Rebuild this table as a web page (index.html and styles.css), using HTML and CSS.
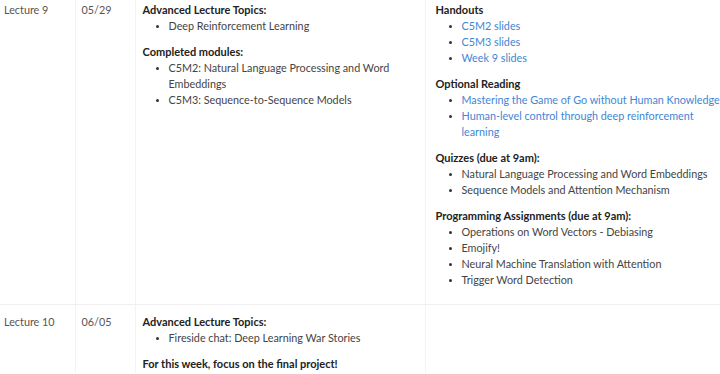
FILE: index.html
```html
<!DOCTYPE html>
<html>
<head>
<meta charset="utf-8">
<link rel="stylesheet" href="styles.css">
</head>
<body>
<table class="schedule">
  <tr class="row first">
    <td class="c-lec">Lecture 9</td>
    <td class="c-date">05/29</td>
    <td class="c-topic">
      <div class="sec">
        <div class="h">Advanced Lecture Topics:</div>
        <ul><li>Deep Reinforcement Learning</li></ul>
      </div>
      <div class="sec">
        <div class="h">Completed modules:</div>
        <ul>
          <li>C5M2: Natural Language Processing and Word Embeddings</li>
          <li>C5M3: Sequence-to-Sequence Models</li>
        </ul>
      </div>
    </td>
    <td class="c-mat">
      <div class="sec">
        <div class="h">Handouts</div>
        <ul>
          <li><a href="#">C5M2 slides</a></li>
          <li><a href="#">C5M3 slides</a></li>
          <li><a href="#">Week 9 slides</a></li>
        </ul>
      </div>
      <div class="sec">
        <div class="h">Optional Reading</div>
        <ul>
          <li><a href="#">Mastering the Game of Go without Human Knowledge</a></li>
          <li><a href="#">Human-level control through deep reinforcement learning</a></li>
        </ul>
      </div>
      <div class="sec">
        <div class="h">Quizzes (due at 9am):</div>
        <ul>
          <li>Natural Language Processing and Word Embeddings</li>
          <li>Sequence Models and Attention Mechanism</li>
        </ul>
      </div>
      <div class="sec">
        <div class="h">Programming Assignments (due at 9am):</div>
        <ul>
          <li>Operations on Word Vectors - Debiasing</li>
          <li>Emojify!</li>
          <li>Neural Machine Translation with Attention</li>
          <li>Trigger Word Detection</li>
        </ul>
      </div>
    </td>
  </tr>
  <tr class="row second">
    <td class="c-lec">Lecture 10</td>
    <td class="c-date">06/05</td>
    <td class="c-topic">
      <div class="sec">
        <div class="h">Advanced Lecture Topics:</div>
        <ul><li>Fireside chat: Deep Learning War Stories</li></ul>
      </div>
      <div class="sec">
        <div class="h">For this week, focus on the final project!</div>
      </div>
    </td>
    <td class="c-mat"></td>
  </tr>
</table>
</body>
</html>
```
FILE: styles.css
```css
html, body {
  margin: 0;
  padding: 0;
  background: #ffffff;
}
body {
  font-family: Lato, "Open Sans", "DejaVu Sans", sans-serif;
  font-size: 10.8px;
  line-height: 16px;
  color: #444;
  width: 720px;
  height: 374px;
  overflow: hidden;
}
.schedule {
  border-collapse: collapse;
  width: 720px;
  table-layout: fixed;
}
.row td {
  box-sizing: border-box;
  vertical-align: top;
  border-left: 1px solid #f3f3f3;
  padding-right: 0;
}
.row td:first-child {
  border-left: none;
}
.row.first td {
  padding-top: 2px;
  padding-bottom: 16px;
  border-bottom: 1px solid #efefef;
}
.row.second td {
  padding-top: 9px;
}
.c-lec { width: 75px; padding-left: 4px; color: #555; }
.c-date { width: 60px; padding-left: 6px; color: #555; }
.c-topic { width: 290px; padding-left: 7px; }
.c-mat { padding-left: 10px; }
.sec + .sec { margin-top: 10px; }
.h {
  font-weight: 700;
  font-size: 11px;
  color: #222;
}
ul {
  margin: 0;
  padding-left: 26px;
  list-style: disc;
}
li::marker { color: #333; font-size: 9px; }
a {
  color: #3f86d4;
  text-decoration: none;
}
```
